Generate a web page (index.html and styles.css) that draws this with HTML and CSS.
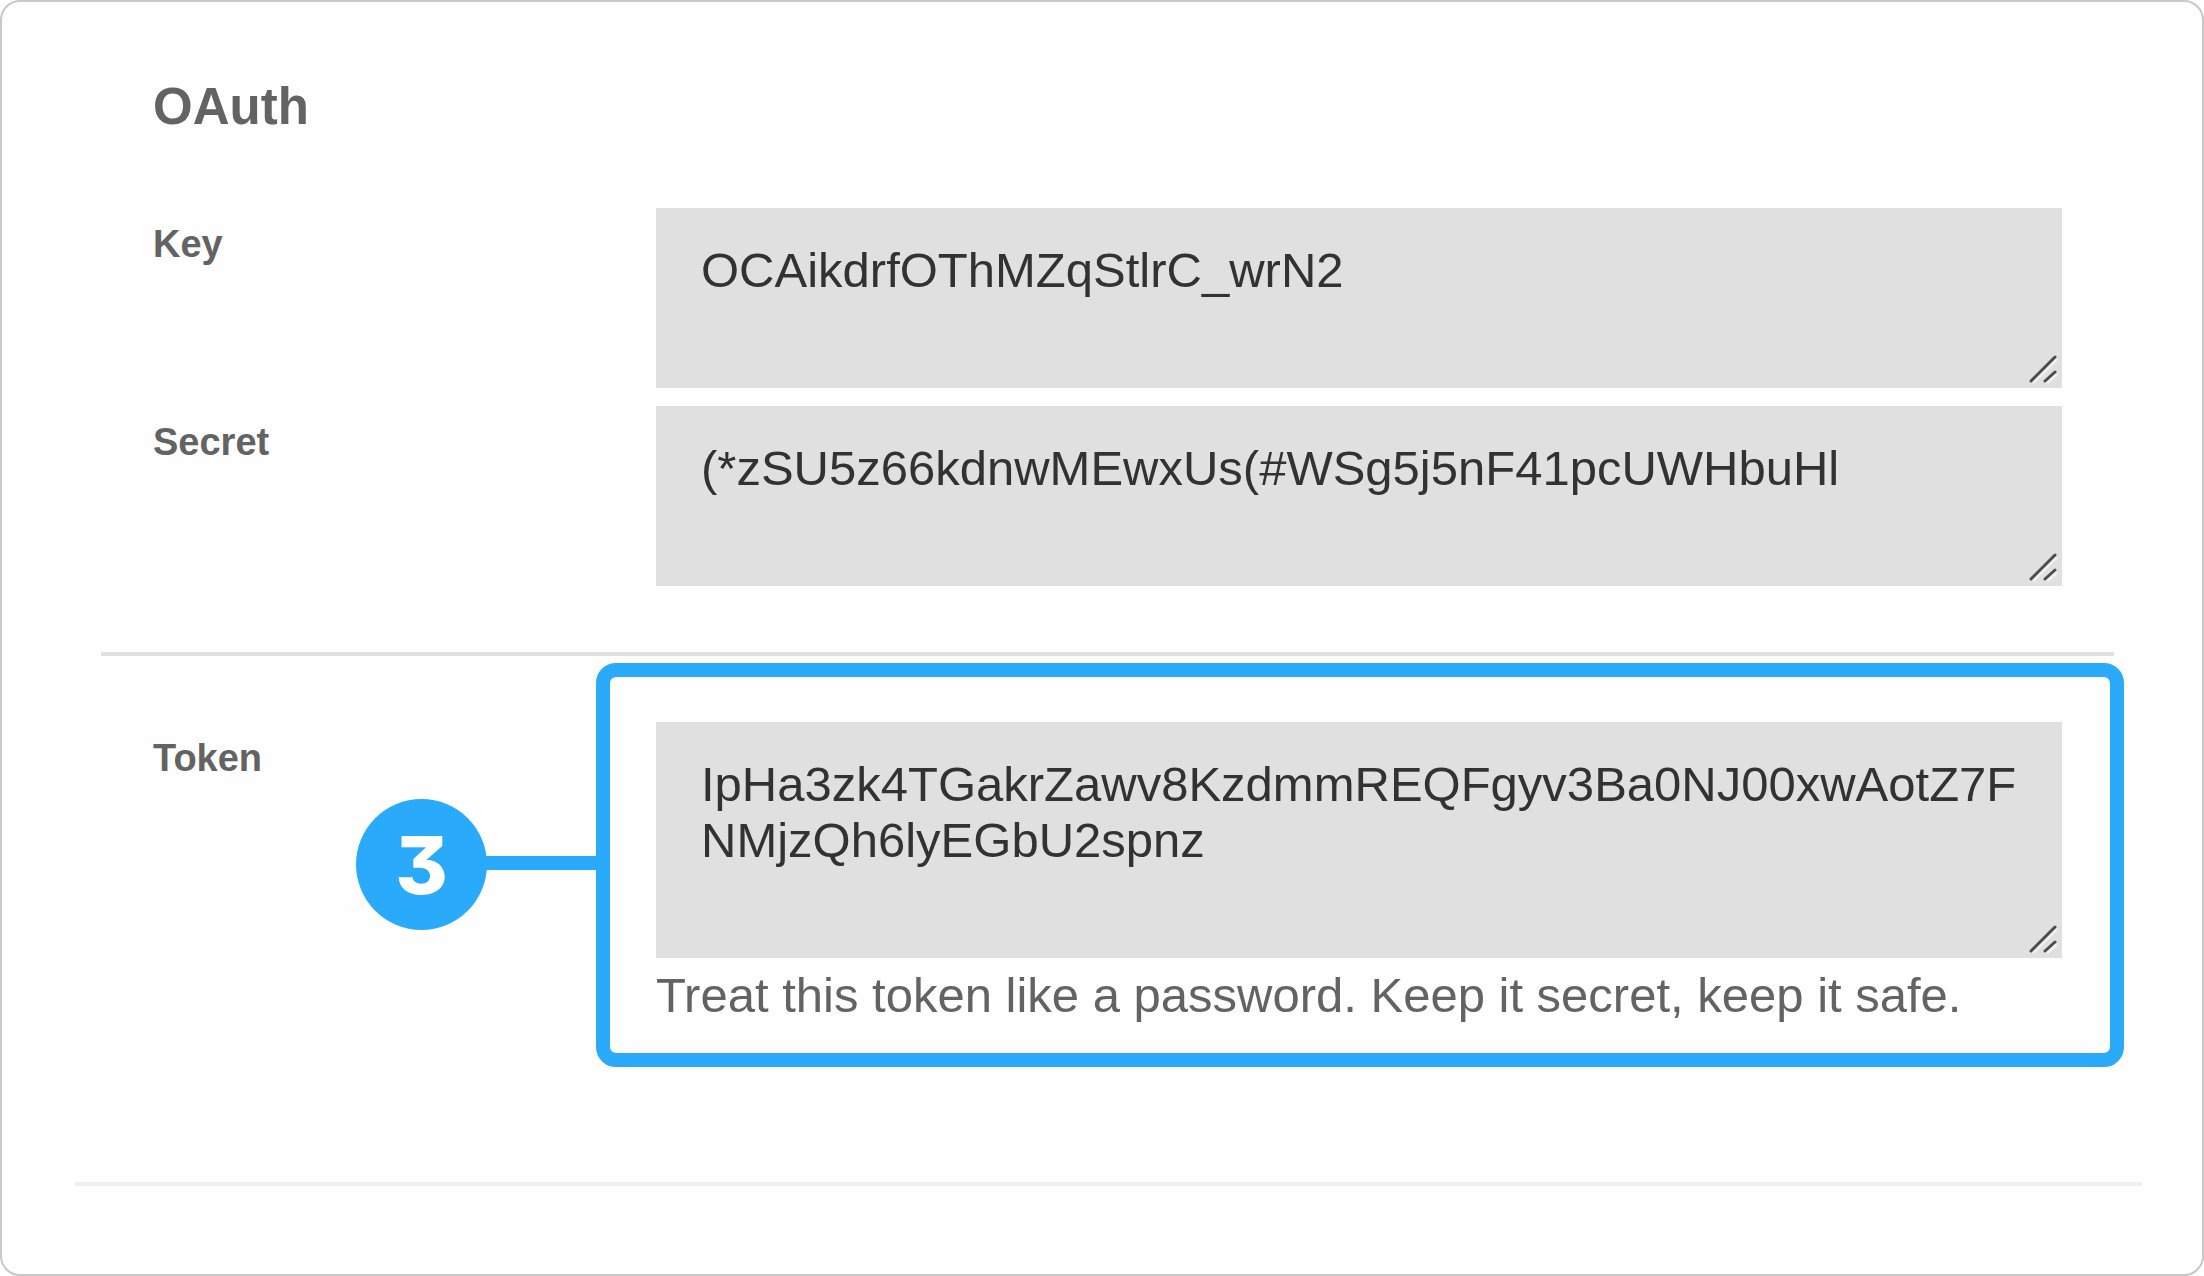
FILE: index.html
```
<!DOCTYPE html>
<html lang="en">
<head>
  <meta charset="UTF-8">
  <meta name="viewport" content="width=device-width, initial-scale=1.0">
  <title>OAuth</title>
  <link rel="stylesheet" href="styles.css">
</head>
<body>
  <main class="card">
    <form class="oauth-form">
      <div class="section">
        <h1>OAuth</h1>
        <div class="field">
          <label for="oauthKey">Key</label>
          <div class="control">
            <textarea id="oauthKey" spellcheck="false" readonly>OCAikdrfOThMZqStlrC_wrN2</textarea>
            <svg class="grip" viewBox="0 0 32 32" aria-hidden="true">
              <path class="grip-light" d="M6 28L28 6M20 28L28 21"/>
              <path class="grip-dark" d="M3 27L27 3M17 27L27 18"/>
            </svg>
          </div>
        </div>
        <div class="field">
          <label for="oauthSecret">Secret</label>
          <div class="control">
            <textarea id="oauthSecret" spellcheck="false" readonly>(*zSU5z66kdnwMEwxUs(#WSg5j5nF41pcUWHbuHl</textarea>
            <svg class="grip" viewBox="0 0 32 32" aria-hidden="true">
              <path class="grip-light" d="M6 28L28 6M20 28L28 21"/>
              <path class="grip-dark" d="M3 27L27 3M17 27L27 18"/>
            </svg>
          </div>
        </div>
      </div>
      <hr class="divider">
      <div class="section">
        <div class="field">
          <label for="oauthToken">Token</label>
          <div class="token">
            <div class="control">
              <textarea id="oauthToken" class="tall" spellcheck="false" readonly aria-describedby="tokenHelp">IpHa3zk4TGakrZawv8KzdmmREQFgyv3Ba0NJ00xwAotZ7FNMjzQh6lyEGbU2spnz</textarea>
              <svg class="grip" viewBox="0 0 32 32" aria-hidden="true">
                <path class="grip-light" d="M6 28L28 6M20 28L28 21"/>
                <path class="grip-dark" d="M3 27L27 3M17 27L27 18"/>
              </svg>
            </div>
            <p class="help" id="tokenHelp">Treat this token like a password. Keep it secret, keep it safe.</p>
            <div class="callout">
              <span class="callout-number">3</span>
            </div>
          </div>
        </div>
      </div>
    </form>
    <hr class="footer-line">
  </main>
</body>
</html>
```

FILE: styles.css
```
* {
  box-sizing: border-box;
}
body {
  margin: 0;
  font-family: "Liberation Sans", Arial, sans-serif;
  color: #636363;
  background: #fff;
}
.card {
  min-height: 100vh;
  padding: 75px 60px 60px 73px;
  border: 2px solid #c8c8c8;
  border-radius: 20px;
  background: #fefefe;
}
.oauth-form {
  margin: 0 28px 0 26px;
}
.section {
  padding: 0 52px;
}
h1 {
  margin: 0 0 71px;
  font-size: 51px;
  line-height: 60px;
}
.field {
  display: grid;
  grid-template-columns: 503px 1fr;
}
.field + .field {
  margin-top: 18px;
}
label {
  padding-top: 14px;
  font-size: 38px;
  font-weight: bold;
  line-height: 44px;
}
.control, .token {
  position: relative;
}
textarea {
  display: block;
  width: 100%;
  height: 180px;
  margin: 0;
  padding: 34px 45px 0;
  border: 0;
  border-radius: 0;
  outline: 0;
  resize: none;
  overflow: hidden;
  word-break: break-all;
  font-family: inherit;
  font-size: 49px;
  line-height: 56px;
  color: #323232;
  background: #e0e0e0;
}
textarea.tall {
  height: 236px;
}
.grip {
  position: absolute;
  right: 2px;
  bottom: 2px;
  width: 32px;
  height: 32px;
  fill: none;
  stroke-width: 3;
  stroke-linecap: round;
}
.grip-light {
  stroke: #f0f0f0;
}
.grip-dark {
  stroke: #4c4c4c;
}
.divider, .footer-line {
  height: 4px;
  margin: 66px 0;
  border: 0;
  background: #e0e0e0;
}
.help {
  margin: 9px 0 0;
  font-size: 49px;
  line-height: 56px;
}
/* numbered frame around the token field */
.callout {
  position: absolute;
  inset: -59px -62px -44px -60px;
  border: 14px solid #2aaafb;
  border-radius: 20px;
  pointer-events: none;
}
.callout::before {
  content: "";
  position: absolute;
  top: 50%;
  right: 100%;
  width: 140px;
  height: 14px;
  margin-top: -9px;
  background: #2aaafb;
}
.callout-number {
  position: absolute;
  top: 50%;
  right: 100%;
  width: 131px;
  height: 131px;
  margin: -66px 123px 0 0;
  border-radius: 50%;
  background: #2aaafb;
  color: #fff;
  font-family: Inter, sans-serif;
  font-size: 80px;
  font-weight: 800;
  font-feature-settings: "cv09";
  line-height: 131px;
  text-align: center;
}
.footer-line {
  margin: 159px 0 0;
  background: #efefef;
}
```
